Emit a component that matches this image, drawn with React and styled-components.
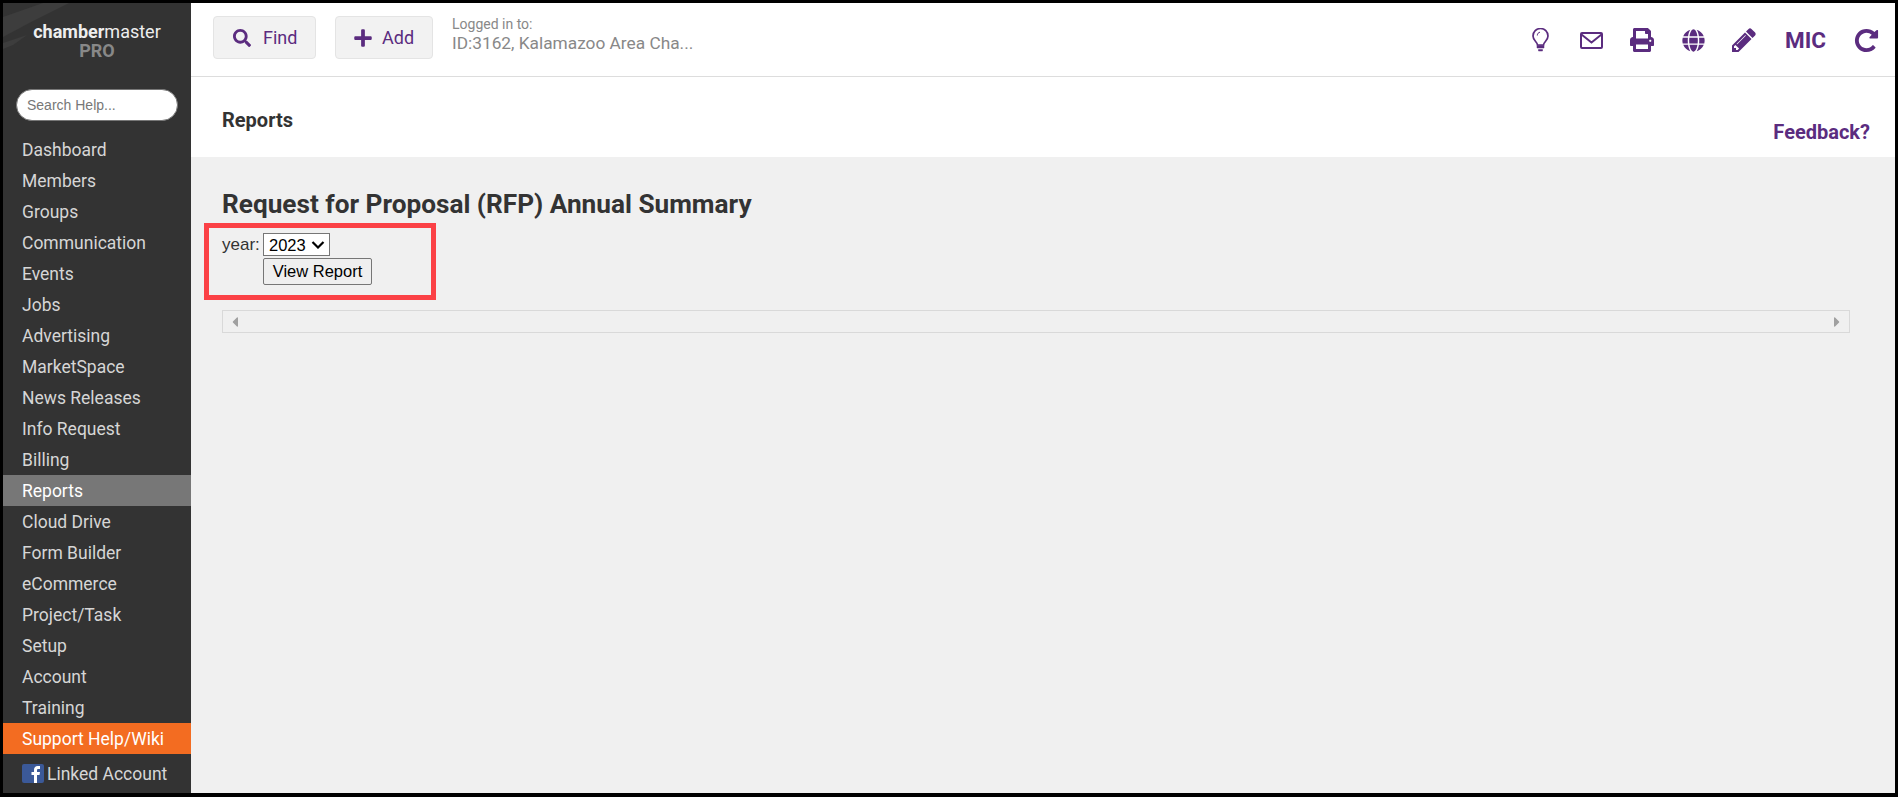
import { FaSearch, FaPlus, FaPrint, FaGlobe, FaCaretLeft, FaCaretRight } from "react-icons/fa";
import styled, { createGlobalStyle } from "styled-components";

const purple = "#5b2c7f";

const GlobalStyle = createGlobalStyle`
  html, body {
    margin: 0;
    padding: 0;
    height: 100%;
    overflow: hidden;
  }
  body {
    background: #000;
    font-family: Roboto, "Liberation Sans", sans-serif;
  }
`;

const Frame = styled.div`
  box-sizing: border-box;
  height: 797px;
  padding: 3px 3px 4px 3px;
  display: flex;
  background: #000;
`;

const Sidebar = styled.aside`
  position: relative;
  width: 188px;
  flex: none;
  background: #333;
  overflow: hidden;
`;

const Swoosh = styled.svg`
  position: absolute;
  left: 0;
  top: 0;
`;

const Logo = styled.div`
  position: relative;
  height: 53px;
  padding-top: 20px;
  text-align: center;
  color: #eee;
  font-size: 18px;
  line-height: 18px;
  b {
    font-weight: 700;
  }
  span {
    font-weight: 400;
  }
`;

const Pro = styled.div`
  color: #888;
  font-weight: 700;
  font-size: 18px;
  line-height: 19px;
`;

const SearchInput = styled.input`
  display: block;
  box-sizing: border-box;
  width: 162px;
  height: 32px;
  margin: 13px 0 13px 13px;
  padding: 0 10px;
  border: 1px solid #777;
  border-radius: 16px;
  background: #fff;
  outline: none;
  font-family: "Liberation Sans", sans-serif;
  font-size: 14px;
  &::placeholder {
    color: #777;
    opacity: 1;
  }
`;

const NavItem = styled.div`
  height: 31px;
  line-height: 32px;
  padding-left: 19px;
  font-size: 17.5px;
  color: ${(props) => (props.$bg ? "#fff" : "#d6d6d6")};
  background: ${(props) => props.$bg || "transparent"};
`;

const LinkedRow = styled.div`
  display: flex;
  align-items: center;
  gap: 3px;
  height: 39px;
  padding-left: 19px;
  font-size: 17.5px;
  color: #d6d6d6;
`;

const Main = styled.main`
  flex: 1;
  min-width: 0;
  display: flex;
  flex-direction: column;
  background: #f0f0f0;
`;

const TopBar = styled.header`
  box-sizing: border-box;
  height: 74px;
  flex: none;
  display: flex;
  align-items: flex-start;
  padding: 13px 17px 0 22px;
  background: #fff;
  border-bottom: 1px solid #ddd;
`;

const ActionButton = styled.div`
  box-sizing: border-box;
  width: ${(props) => props.$width}px;
  height: 43px;
  margin-right: 19px;
  display: flex;
  align-items: center;
  gap: ${(props) => props.$gap}px;
  padding-left: ${(props) => props.$pad}px;
  background: #f2f2f2;
  border: 1px solid #e4e4e4;
  border-radius: 4px;
  color: ${purple};
  font-size: 18px;
`;

const LoggedIn = styled.div`
  padding-top: 1px;
  color: #888;
`;

const LoggedLabel = styled.div`
  font-size: 14px;
  line-height: 15px;
`;

const LoggedName = styled.div`
  font-size: 17.3px;
  line-height: 22px;
`;

const IconBar = styled.nav`
  margin-left: auto;
  display: flex;
  align-items: center;
  height: 48px;
  color: ${purple};
`;

const IconSlot = styled.span`
  display: flex;
  justify-content: center;
  width: 24px;
  margin-left: ${(props) => props.$gap || 0}px;
  svg {
    flex: none;
  }
`;

const Mic = styled.span`
  width: 40px;
  margin-left: 29px;
  font-size: 22.5px;
  font-weight: 700;
  white-space: nowrap;
`;

const PageHead = styled.div`
  box-sizing: border-box;
  height: 80px;
  flex: none;
  display: flex;
  justify-content: space-between;
  background: #fff;
  padding: 31px 25px 0 31px;
`;

const PageName = styled.div`
  font-size: 20px;
  font-weight: 700;
  color: #333;
  line-height: 24px;
`;

const Feedback = styled.div`
  align-self: flex-end;
  padding-bottom: 13px;
  font-size: 20px;
  font-weight: 700;
  color: ${purple};
`;

const Content = styled.div`
  padding: 30px 31px 0 31px;
`;

const Title = styled.h1`
  margin: 0 0 12px 0;
  font-size: 26.2px;
  line-height: 34px;
  font-weight: 700;
  color: #333;
`;

const ReportForm = styled.form`
  position: relative;
  display: grid;
  grid-template-columns: 41px auto;
  justify-content: start;
  align-items: center;
  row-gap: 2px;
  margin: 0 0 25px 0;
  font-family: "Liberation Sans", sans-serif;
  font-size: 17px;
  color: #333;
`;

const Highlight = styled.div`
  position: absolute;
  left: -18px;
  top: -10px;
  width: 232px;
  height: 77px;
  box-sizing: border-box;
  border: 5px solid #fb4146;
  pointer-events: none;
`;

const SelectBox = styled.label`
  position: relative;
  justify-self: start;
  display: block;
  width: 67px;
  height: 23px;
`;

const YearSelect = styled.select`
  display: block;
  appearance: none;
  box-sizing: border-box;
  width: 100%;
  height: 100%;
  padding: 0 0 0 5px;
  border: 1px solid #767676;
  border-radius: 0;
  background: #fff;
  font-family: "Liberation Sans", sans-serif;
  font-size: 16.5px;
  color: #000;
`;

const SelectArrow = styled.svg`
  position: absolute;
  right: 5px;
  top: 8px;
  pointer-events: none;
`;

const ViewButton = styled.button`
  grid-column: 2;
  justify-self: start;
  box-sizing: border-box;
  width: 109px;
  height: 27px;
  padding: 0;
  background: #efefef;
  border: 1px solid #767676;
  border-radius: 2px;
  font-family: "Liberation Sans", sans-serif;
  font-size: 16.5px;
  color: #000;
`;

const ScrollTrack = styled.div`
  box-sizing: border-box;
  width: 1628px;
  height: 23px;
  display: flex;
  justify-content: space-between;
  align-items: center;
  padding: 0 4px;
  border: 1px solid #d9d9d9;
  color: #a0a0a0;
  font-size: 16px;
`;

const NAV = [
  "Dashboard", "Members", "Groups", "Communication", "Events", "Jobs", "Advertising",
  "MarketSpace", "News Releases", "Info Request", "Billing", "Reports", "Cloud Drive",
  "Form Builder", "eCommerce", "Project/Task", "Setup", "Account", "Training",
];

function FacebookIcon() {
  return (
    <svg width="22" height="20" viewBox="0 0 22 20">
      <rect width="22" height="19" rx="2" fill="#3b5998" />
      <path d="M12 19v-8H9.500V8H12V6c0-2.600 1.500-4 3.700-4H18v3h-1.500c-1.100 0-1.500.5-1.500 1.400V8h3l-.5 3H15v8z" fill="#fff" />
    </svg>
  );
}

function Glyph({ size, d }) {
  return (
    <svg width={size} height={size} viewBox="0 0 1792 1792" fill="currentColor">
      <path d={d} />
    </svg>
  );
}

function BulbIcon() {
  return (
    <svg width="17" height="24" viewBox="0 0 17 24" fill="none" stroke="currentColor" strokeWidth="1.700">
      <path d="M5.500 17C5.200 13.500 1 12.500 1 8a7.500 7.500 0 0 1 15 0c0 4.500-4.200 5.500-4.500 9z" />
      <path d="M5.300 7.500C5.300 5.500 6.500 4.500 8 4.200" strokeWidth="1" />
      <path d="M5 17.500h7v2.500H5zM6.500 21.500h4v1.500h-4z" fill="currentColor" strokeWidth="0.500" />
    </svg>
  );
}

function MailIcon() {
  return (
    <svg width="23" height="17" viewBox="0 0 23 17" fill="none" stroke="currentColor" strokeWidth="2">
      <rect x="1" y="1" width="21" height="15" rx="1" />
      <path d="M1.500 2.500 11.500 10.500 21.500 2.500" />
    </svg>
  );
}

function PencilIcon() {
  return (
    <Glyph
      size={28}
      d="M491 1536l91-91-235-235-91 91v107h128v128h107zm523-928q0-22-22-22-10 0-17 7l-542 542q-7 7-7 17 0 22 22 22 10 0 17-7l542-542q7-7 7-17zm-54-192l416 416-832 832h-416v-416zm683 96q0 53-37 90l-166 166-416-416 166-165q36-38 90-38 53 0 91 38l235 234q37 39 37 91z"
    />
  );
}

function RepeatIcon() {
  return (
    <Glyph
      size={27}
      d="M1664 256v448q0 26-19 45t-45 19h-448q-42 0-59-40-17-39 14-69l138-138q-148-137-349-137-104 0-198.500 40.500t-163.500 109.500-109.500 163.500-40.500 198.500 40.500 198.500 109.500 163.500 163.500 109.500 198.500 40.500q119 0 225-52t179-147q7-10 23-12 15 0 25 9l137 138q9 8 9.500 20.500t-7.500 22.500q-109 132-264 204.500t-327 72.500q-156 0-298-61t-245-164-164-245-61-298 61-298 164-245 245-164 298-61q147 0 284.500 55.500t244.500 156.500l130-129q29-31 70-14 39 17 39 59z"
    />
  );
}

export default function App() {
  return (
    <Frame>
      <GlobalStyle />
      <Sidebar>
        <Swoosh width="70" height="50" viewBox="0 0 70 50">
          <path d="M0 14 L40 0 L66 0 L30 18 L0 34z" fill="#3d3d3d" />
          <path d="M0 40 L24 32 L10 42 L0 46z" fill="#3d3d3d" />
        </Swoosh>
        <Logo>
          <b>chamber</b><span>master</span>
          <Pro>PRO</Pro>
        </Logo>
        <SearchInput placeholder="Search Help..." />
        {NAV.map((name) => (
          <NavItem key={name} $bg={name === "Reports" ? "#777" : undefined}>{name}</NavItem>
        ))}
        <NavItem $bg="#f36c21">Support Help/Wiki</NavItem>
        <LinkedRow><FacebookIcon />Linked Account</LinkedRow>
      </Sidebar>
      <Main>
        <TopBar>
          <ActionButton $width={103} $gap={12} $pad={19}><FaSearch size={18} />Find</ActionButton>
          <ActionButton $width={98} $gap={9} $pad={17}><FaPlus size={20} />Add</ActionButton>
          <LoggedIn>
            <LoggedLabel>Logged in to:</LoggedLabel>
            <LoggedName>ID:3162, Kalamazoo Area Cha...</LoggedName>
          </LoggedIn>
          <IconBar>
            <IconSlot><BulbIcon /></IconSlot>
            <IconSlot $gap={27}><MailIcon /></IconSlot>
            <IconSlot $gap={27}><FaPrint size={24} /></IconSlot>
            <IconSlot $gap={27}><FaGlobe size={23} /></IconSlot>
            <IconSlot $gap={27}><PencilIcon /></IconSlot>
            <Mic>MIC</Mic>
            <IconSlot $gap={29}><RepeatIcon /></IconSlot>
          </IconBar>
        </TopBar>
        <PageHead>
          <PageName>Reports</PageName>
          <Feedback>Feedback?</Feedback>
        </PageHead>
        <Content>
          <Title>Request for Proposal (RFP) Annual Summary</Title>
          <ReportForm onSubmit={(e) => e.preventDefault()}>
            <Highlight />
            <span>year:</span>
            <SelectBox>
              <YearSelect defaultValue="2023"><option>2023</option></YearSelect>
              <SelectArrow width="14" height="8" viewBox="0 0 14 8" fill="none" stroke="#000" strokeWidth="2.200">
                <path d="M1.500 1 7 6.500 12.500 1" />
              </SelectArrow>
            </SelectBox>
            <ViewButton>View Report</ViewButton>
          </ReportForm>
          <ScrollTrack><FaCaretLeft /><FaCaretRight /></ScrollTrack>
        </Content>
      </Main>
    </Frame>
  );
}
